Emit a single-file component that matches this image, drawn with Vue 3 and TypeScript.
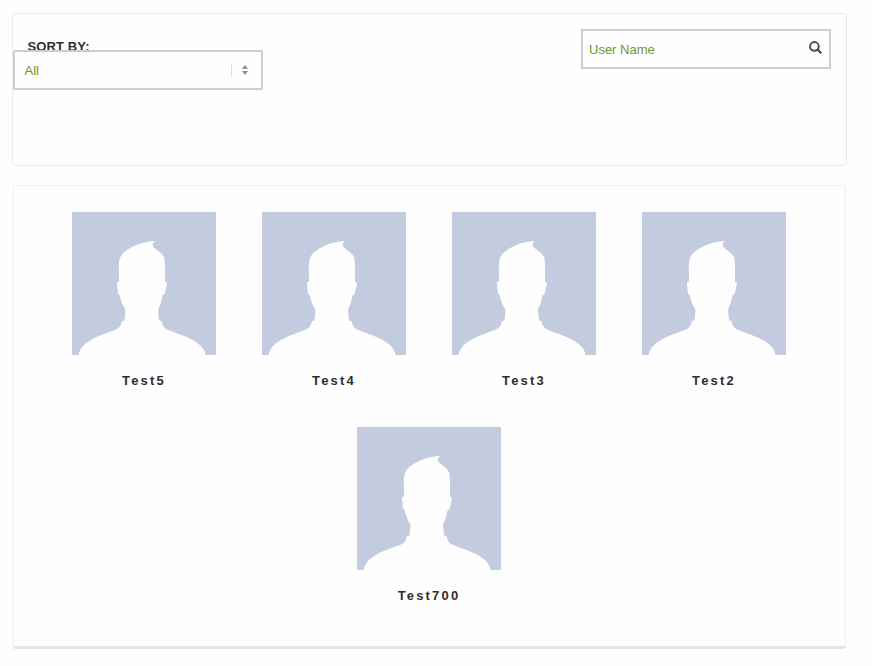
<script setup lang="ts">
import { ref } from 'vue'

interface Member {
  id: number
  name: string
}

const members: Member[] = [
  { id: 5, name: 'Test5' },
  { id: 4, name: 'Test4' },
  { id: 3, name: 'Test3' },
  { id: 2, name: 'Test2' },
  { id: 700, name: 'Test700' },
]

const query = ref('')
</script>

<template>
  <main class="page">
    <section class="filters">
      <div class="sort">
        <div class="sort-label">SORT BY:</div>
        <div class="select" role="button" tabindex="0">
          <span class="select-value">All</span>
          <span class="select-divider"></span>
          <svg class="select-arrows" width="6" height="10" viewBox="0 0 6 10">
            <path d="M3 0 6 4H0ZM0 6H6L3 10Z" fill="#8e8e8e" />
          </svg>
        </div>
      </div>
      <label class="search">
        <input v-model="query" class="search-input" type="text" placeholder="User Name" />
        <svg class="search-icon" width="13" height="13" viewBox="0 0 13 13">
          <circle cx="5.4" cy="5.4" r="4.3" fill="none" stroke="#4a4c55" stroke-width="2" />
          <path d="M8.500 8.500 11.600 11.600" fill="none" stroke="#4a4c55" stroke-width="2.2" stroke-linecap="round" />
        </svg>
      </label>
    </section>

    <section class="members">
      <article v-for="member in members" :key="member.id" class="member">
        <svg class="avatar" width="144" height="143" viewBox="0 0 144 143">
          <rect width="144" height="143" fill="#c3cbdf" />
          <path
            fill="#fefefe"
            d="M6.5 143C8 134 17 128 28 123.500L44 117.500C48.500 115.500 49 112.500 50 109L52.500 108.500L53.500 97.500C50.500 94 49 88 47.500 83L46 81.500C45.500 77 45 73 45 70L47 69.500L46.800 55C46.800 46 49 42 54.500 38.500C62 33 72 29.500 83 29C81 31 80 32 81 34C83 38 91 40 92.500 47C93.500 54 93 62 93 70L95 70.500C94.500 75 93.500 79 92.500 82L90.500 83.500C89.500 89 88 94 86 97.500L87 108.500L89.500 109C90.500 112.500 91 115.500 95 117.500L112 124C123 128 133 135 133.500 143Z"
          />
        </svg>
        <h3 class="member-name">{{ member.name }}</h3>
      </article>
    </section>
  </main>
</template>

<style>
body {
  background: #fefefe;
}
</style>

<style scoped>
.page {
  box-sizing: border-box;
  width: 872px;
  height: 666px;
  padding: 13px 25px 0 12px;
  background: #fefefe;
  color: #2e2e30;
  font-family: "Liberation Sans", Arial, sans-serif;
  font-size: 13px;
}

.filters {
  box-sizing: border-box;
  display: flex;
  justify-content: space-between;
  align-items: flex-start;
  width: 835px;
  height: 153px;
  padding: 15px 15px 0 0;
  border: 1px solid #ebebeb;
  border-radius: 4px;
}

.sort {
  width: 250px;
  padding-top: 10px;
}

.sort-label {
  height: 11px;
  padding-left: 14.500px;
  line-height: 15px;
  font-weight: bold;
  letter-spacing: 0.12px;
}

.select {
  position: relative;
  box-sizing: border-box;
  display: flex;
  align-items: center;
  height: 40px;
  padding: 0 13px 0 9.500px;
  border: 2px solid #cdcdcd;
  border-radius: 2px;
  background: #fefefe;
  color: #6c9430;
}

.select-value {
  flex: 1;
}

.select-divider {
  width: 1px;
  height: 13px;
  margin-right: 10px;
  background: #dedede;
}

.search {
  box-sizing: border-box;
  display: flex;
  width: 250px;
  height: 40px;
  border: 2px solid #cdcdcd;
}

.search-input {
  flex: 1;
  min-width: 0;
  padding: 0 0 0 6px;
  border: 0;
  outline: 0;
  background: transparent;
  color: #6c9430;
  font: inherit;
}

.search-input::placeholder {
  color: #6c9430;
  opacity: 1;
}

.search-icon {
  margin: 10px 7px 0 0;
}

.members {
  box-sizing: border-box;
  display: flex;
  flex-wrap: wrap;
  justify-content: center;
  align-content: flex-start;
  width: 833px;
  height: 464px;
  margin: 19px 0 0 1px;
  padding: 26px 36px 0 35px;
  border: 1px solid #f0f0f0;
  border-bottom: 3px solid #e5e5e5;
  border-radius: 2px;
}

.member {
  display: flex;
  flex-direction: column;
  align-items: center;
  width: 190px;
  height: 215px;
}

.avatar {
  display: block;
}

.member-name {
  margin: 18px 0 0;
  font-size: 13px;
  line-height: 15px;
  letter-spacing: 2.17px;
}
</style>
